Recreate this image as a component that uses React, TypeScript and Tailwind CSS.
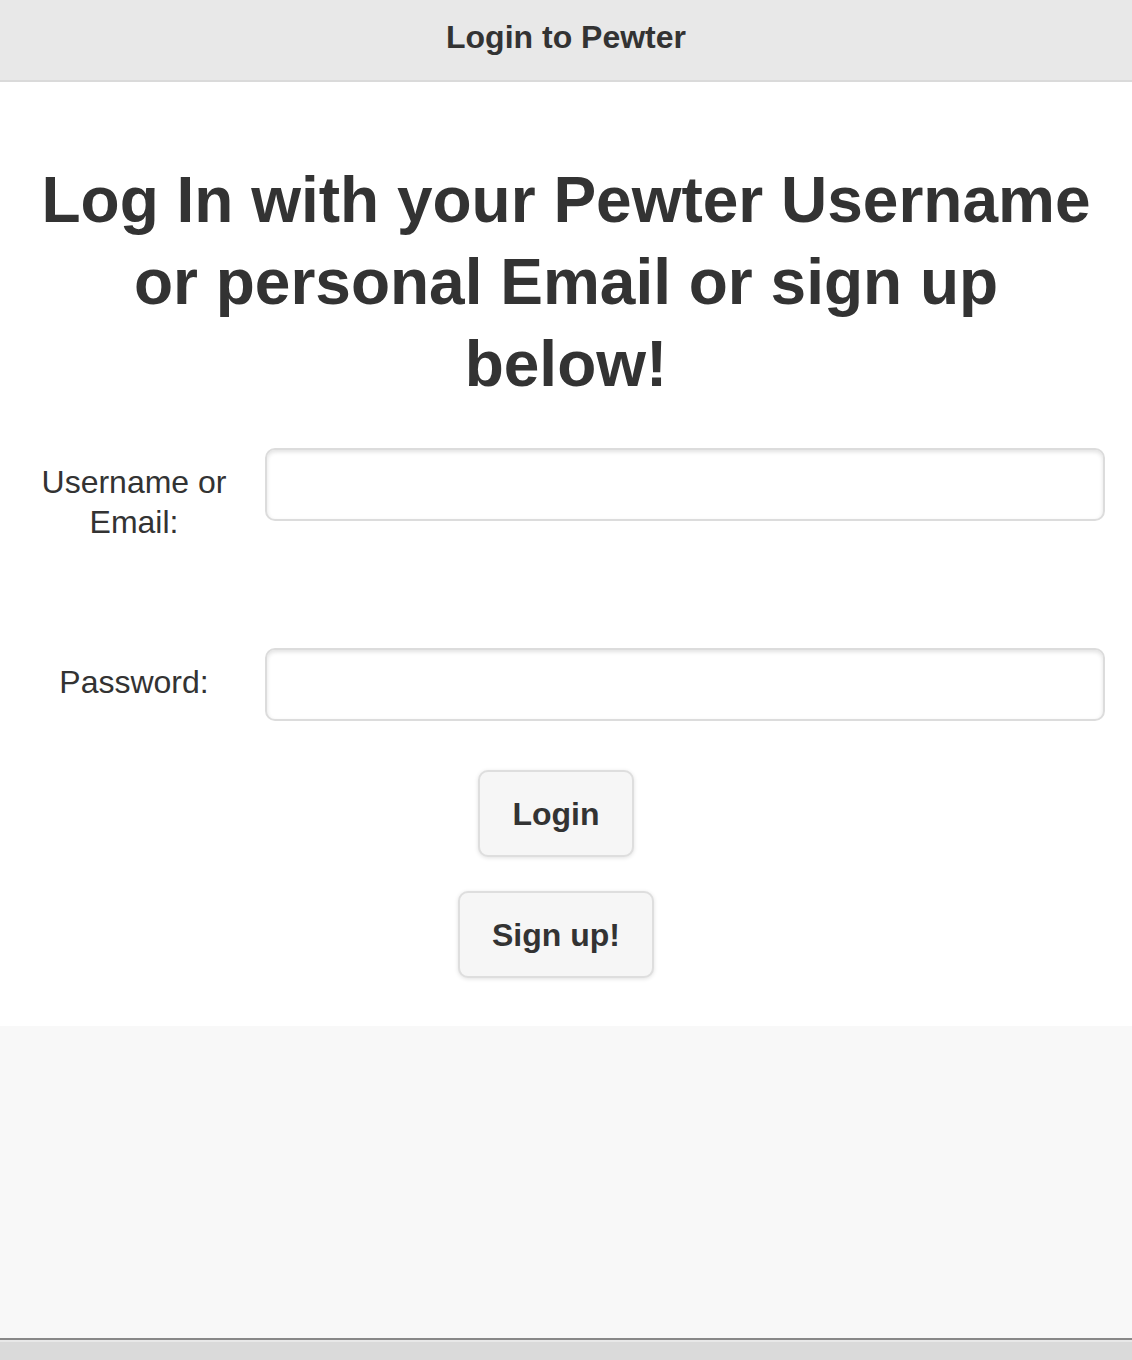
import React from 'react';

const font = { fontFamily: '"Liberation Sans", Arial, Helvetica, sans-serif' };

const Field: React.FC<{ label: React.ReactNode; type: string; className?: string }> = ({ label, type, className }) => (
    <div className={`flex items-start gap-[24px] ${className ?? ''}`}>
        <label className="w-[214px] shrink-0 pt-[14px] text-center text-[32px] leading-[40px] text-[#333]">
            {label}
        </label>
        <input
            type={type}
            className="h-[73px] flex-1 rounded-[10px] border-2 border-[#dcdcdc] bg-white px-4 text-[32px] text-[#333] shadow-[inset_0_2px_4px_rgba(0,0,0,0.12)] outline-none"
        />
    </div>
);

const App: React.FC = () => {
    return (
        <div className="flex min-h-[1360px] flex-col bg-[#f8f8f8]" style={font}>
            <header className="flex h-[82px] shrink-0 items-center justify-center border-b-2 border-[#dadada] bg-[#e8e8e8] pb-[7px]">
                <h1 className="text-[32px] font-bold text-[#333]">Login to Pewter</h1>
            </header>

            <main className="bg-white px-[27px] pb-[48px]">
                <h2 className="mt-[77px] text-center text-[64px] font-bold leading-[82px] text-[#333]">
                    Log In with your Pewter Username or personal Email or sign up below!
                </h2>

                <form className="mt-[43px]" onSubmit={e => e.preventDefault()}>
                    <Field label={<>Username or<br />Email:</>} type="text" />
                    <Field label="Password:" type="password" className="mt-[106px]" />

                    <div className="mt-[49px] flex flex-col items-center gap-[34px] pr-[20px]">
                        <button className="h-[87px] rounded-[10px] border-2 border-[#dedede] bg-[#f6f6f6] px-[32px] text-[32px] font-bold text-[#333] shadow-[0_1px_4px_rgba(0,0,0,0.12)]">
                            Login
                        </button>
                        <button className="h-[87px] rounded-[10px] border-2 border-[#dedede] bg-[#f6f6f6] px-[32px] text-[32px] font-bold text-[#333] shadow-[0_1px_4px_rgba(0,0,0,0.12)]">
                            Sign up!
                        </button>
                    </div>
                </form>
            </main>

            <div className="flex-1" />

            <footer className="h-[22px] shrink-0 border-t-2 border-[#888] bg-[#dadada]">
                <div className="h-[2px] bg-[#e8e8e8]" />
            </footer>
        </div>
    );
};

export default App;
